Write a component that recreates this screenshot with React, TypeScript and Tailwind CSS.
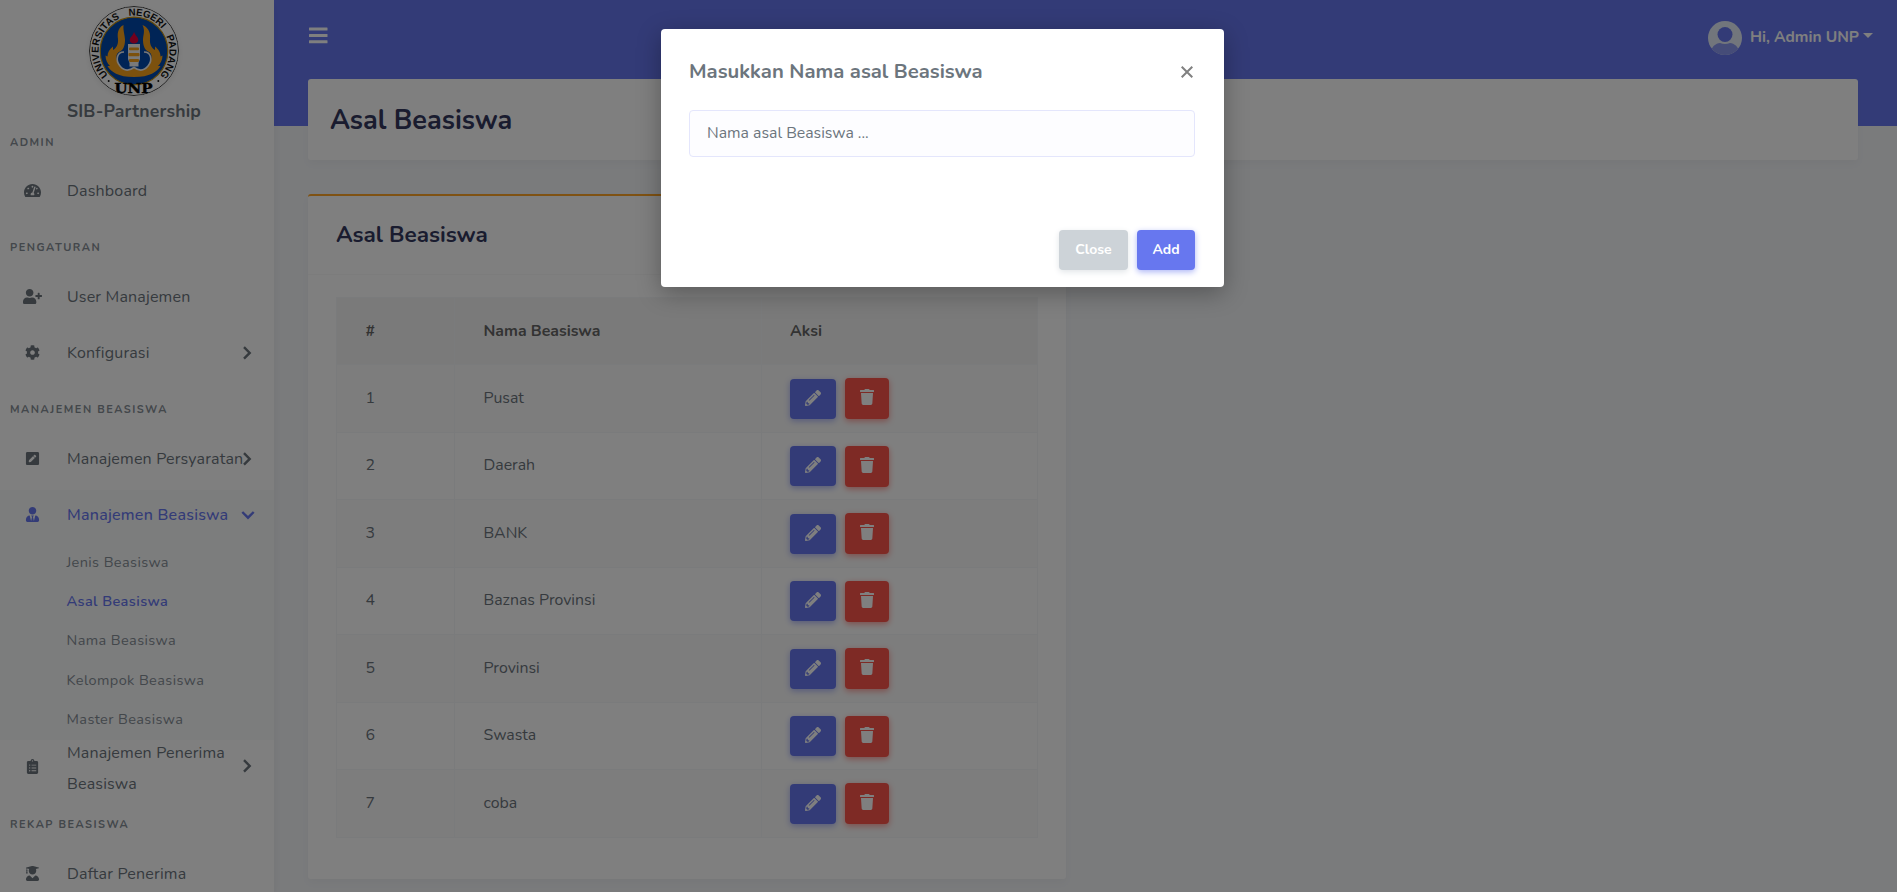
import type { ReactNode } from "react";
import {
  FaClipboardList,
  FaCog,
  FaPencilAlt,
  FaPenSquare,
  FaTachometerAlt,
  FaTrash,
  FaUserGraduate,
  FaUserPlus,
  FaUserTie,
} from "react-icons/fa";

const scholarships = ["Pusat", "Daerah", "BANK", "Baznas Provinsi", "Provinsi", "Swasta", "coba"];
const submenu = ["Jenis Beasiswa", "Asal Beasiswa", "Nama Beasiswa", "Kelompok Beasiswa", "Master Beasiswa"];

function Logo() {
  return (
    <svg viewBox="0 0 90 90" className="size-[90px] rounded-full shadow-[0_2px_6px_rgba(0,0,0,0.08)]">
      <defs>
        <path id="ring" d="M9.500 45 a35.5 35.5 0 1 1 71 0 a35.5 35.5 0 1 1 -71 0" transform="rotate(-43 45 45)" />
      </defs>
      <circle cx="45" cy="45" r="44.5" fill="#fff" stroke="#444" strokeWidth="1" />
      <circle cx="45" cy="45" r="33.8" fill="#0048ac" stroke="#c8900c" strokeWidth="1.2" />
      <g className="font-[Liberation_Sans] text-[10px] font-bold" fill="#111">
        <text>
          <textPath href="#ring" startOffset="0" textLength="68" lengthAdjust="spacing">
            UNIVERSITAS
          </textPath>
        </text>
        <text>
          <textPath href="#ring" startOffset="77" textLength="37" lengthAdjust="spacingAndGlyphs">
            NEGERI
          </textPath>
        </text>
        <text>
          <textPath href="#ring" startOffset="122.500" textLength="42.500" lengthAdjust="spacing">
            PADANG
          </textPath>
        </text>
      </g>
      <circle cx="19.700" cy="75" r="1" fill="#111" />
      <circle cx="69.300" cy="75" r="1" fill="#111" />
      <text
        x="44.500"
        y="87"
        textAnchor="middle"
        textLength="38"
        lengthAdjust="spacingAndGlyphs"
        className="font-[DejaVu_Serif] text-[12px] font-bold"
        fill="#000"
        stroke="#000"
        strokeWidth="0.400"
      >
        UNP
      </text>
      <path
        d="M34.500 19 C28 22 28.500 29 29 33 C29.500 38 27.500 42 24 44 L24 40.500 C20.500 43.500 18.500 46 18.500 50.500 L16.500 49.500 C16.500 54 18.500 57.500 21 60 L18.500 60 C22 66 29 71 45 71 C61 71 68 66 71.500 60 L69 60 C71.500 57.500 73.500 54 73.500 49.500 L71.500 50.500 C71.500 46 69.500 43.500 66 40.500 L66 44 C62.500 42 60.500 38 61 33 C61.500 29 61 22 53.500 19 C56.500 25 54 29 54 34 C54 40 56 44.500 60 46 C64 48 63 55 59 60 C55 65 50 65 45 62 C40 65 35 65 31 60 C27 55 26 48 30 46 C34 44.500 36 40 36 34 C36 29 34 25 34.500 19Z"
        fill="#f9a21a"
      />
      <path
        d="M35 46 C28 46 26 54 31 60 C35 65 40 65 45 61.500 C50 65 55 65 59 60 C64 54 62 46 55 46"
        fill="#0048ac"
        stroke="#f3f3f3"
        strokeWidth="1.600"
      />
      <path d="M39 38 H51 V53 L49.500 57 V60.500 H40.500 V57 L39 53Z" fill="#f5f5f5" />
      <rect x="40" y="41.500" width="10" height="2.800" rx="1" fill="#f9a21a" />
      <rect x="39.500" y="47" width="11" height="3.300" rx="1" fill="#f9a21a" />
      <rect x="40" y="53" width="10" height="3" rx="1" fill="#f9a21a" />
      <path d="M45 25.500 C46 29.500 49.300 31 49.300 34 C49.300 38.500 40.700 38.500 40.700 34 C40.700 31 44.500 29.500 45 25.500Z" fill="#e4003a" />
    </svg>
  );
}

function MenuHeader({ children, className = "" }: { children: ReactNode; className?: string }) {
  return (
    <div className={`flex h-4 shrink-0 items-center pl-[10px] text-[11px] font-bold leading-4 tracking-[1.5px] text-[#868e96] ${className}`}>
      {children}
    </div>
  );
}

function Chevron({ down = false }: { down?: boolean }) {
  return (
    <svg viewBox="0 0 14 14" className={down ? "size-[14px] translate-x-[1px]" : "-mt-px size-[14px]"} fill="none" stroke="currentColor" strokeWidth="2.400">
      <path d={down ? "M1.300 4 L7 9.700 L12.700 4" : "M4 1.200 L9.700 6.900 L4 12.600"} />
    </svg>
  );
}

type ItemProps = { icon: ReactNode; label: ReactNode; arrow?: "right" | "down"; active?: boolean; className?: string };

function MenuItem({ icon, label, arrow, active, className = "" }: ItemProps) {
  return (
    <div
      className={`flex h-[50px] shrink-0 items-center ${
        active ? "bg-[#f8fafb] font-medium tracking-[0.25px] text-[#6777ef]" : "tracking-[0.17px] text-[#6c757d]"
      } ${className}`}
    >
      <span className="ml-5 flex w-6 shrink-0 justify-center pb-px text-[15px]">{icon}</span>
      <span className="ml-[23px] w-[176px] shrink-0 whitespace-nowrap pt-px text-base leading-[31px]">{label}</span>
      {arrow && (
        <span className="-ml-[3px] shrink-0">
          <Chevron down={arrow === "down"} />
        </span>
      )}
    </div>
  );
}

function Sidebar() {
  return (
    <aside className="z-10 flex w-[274px] shrink-0 flex-col overflow-hidden bg-white shadow-[0_4px_8px_rgba(0,0,0,0.06)]">
      <div className="flex shrink-0 flex-col items-center pr-[6px] pt-[6px]">
        <Logo />
        <div className="mt-[3px] text-[17.6px] font-bold leading-6 tracking-[0.2px] text-[#6c757d]">SIB-Partnership</div>
      </div>
      <MenuHeader className="mt-[12px]">ADMIN</MenuHeader>
      <MenuItem className="mt-[15px]" icon={<FaTachometerAlt className="size-[17px]" />} label="Dashboard" />
      <MenuHeader className="mt-[24px]">PENGATURAN</MenuHeader>
      <MenuItem className="mt-[16px]" icon={<FaUserPlus className="size-[19px]" />} label="User Manajemen" />
      <MenuItem className="mt-[6px]" icon={<FaCog />} label="Konfigurasi" arrow="right" />
      <MenuHeader className="mt-[24px]">MANAJEMEN BEASISWA</MenuHeader>
      <MenuItem className="mt-[16px]" icon={<FaPenSquare />} label="Manajemen Persyaratan" arrow="right" />
      <MenuItem className="mt-[6px]" active icon={<FaUserTie />} label="Manajemen Beasiswa" arrow="down" />
      <ul className="flex shrink-0 flex-col bg-[#f8fafb] pb-px pt-[3px]">
        {submenu.map((name) => (
          <li
            key={name}
            className={`flex h-[39.3px] items-center pl-[66.500px] text-[14.500px] tracking-[0.4px] ${
              name === "Asal Beasiswa" ? "font-semibold text-[#6777ef]" : "text-[#868e96]"
            }`}
          >
            {name}
          </li>
        ))}
      </ul>
      <MenuItem
        className="mt-[1.500px]"
        icon={<FaClipboardList />}
        label={
          <span className="block pt-[3px]">
            Manajemen Penerima
            <br />
            Beasiswa
          </span>
        }
        arrow="right"
      />
      <MenuHeader className="mt-[25px]">REKAP BEASISWA</MenuHeader>
      <MenuItem className="mt-[16px]" icon={<FaUserGraduate />} label="Daftar Penerima" />
    </aside>
  );
}

function Navbar() {
  return (
    <header className="flex h-[79px] shrink-0 items-start justify-between pl-[35px] pr-[24px]">
      <svg viewBox="0 0 19 17" className="mt-[27px] h-[17px] w-[19px]" fill="#fff">
        <rect x="0" y="0.500" width="18.500" height="3" rx="0.500" />
        <rect x="0" y="7" width="18.500" height="3" rx="0.500" />
        <rect x="0" y="13.300" width="18.500" height="3" rx="0.500" />
      </svg>
      <div className="mt-[21px] flex items-center text-white">
        <svg viewBox="0 0 34 34" className="size-[34px] rounded-full">
          <rect width="34" height="34" fill="#e4ecf9" />
          <circle cx="17" cy="13.500" r="7.500" fill="#6777ef" />
          <path d="M2 34 C3 25 8 22.500 12 22 Q17 24 22 22 C26 22.500 31 25 32 34Z" fill="#8a98f0" />
        </svg>
        <span className="-mt-[3px] ml-[8px] text-[15.55px] font-bold leading-6">Hi, Admin UNP</span>
        <span className="-mt-[6px] ml-1 border-x-[5px] border-t-[5px] border-x-transparent border-t-white" />
      </div>
    </header>
  );
}

function ScholarshipTable() {
  const cell = "border border-[#f4f6f9] pl-[28.500px] pr-[28px] pb-0 pt-px";
  const actions = "border border-[#f4f6f9] px-[28px] pb-0 pt-px";
  return (
    <table className="w-[701px] table-fixed border-collapse text-left text-[15.85px] text-[#6c757d]">
      <colgroup>
        <col className="w-[118px]" />
        <col className="w-[307px]" />
        <col className="w-[276px]" />
      </colgroup>
      <thead>
        <tr className="h-[67px] bg-[#f5f5f5] font-bold text-[#666]">
          <th className={cell}>#</th>
          <th className={cell}>Nama Beasiswa</th>
          <th className={actions}>Aksi</th>
        </tr>
      </thead>
      <tbody>
        {scholarships.map((name, i) => (
          <tr key={name} className="h-[67.5px] odd:bg-[#fafafa]">
            <td className={cell}>{i + 1}</td>
            <td className={cell}>{name}</td>
            <td className={actions}>
              <div className="flex items-center gap-[9px] text-white">
                <button className="flex h-10 w-[46px] items-center justify-center rounded bg-[#6777ef] pb-[2px] shadow-[0_2px_6px_#acb5f6]">
                  <FaPencilAlt className="size-4" />
                </button>
                <button className="flex h-[41px] w-11 items-center justify-center rounded bg-[#fc544b] pb-[3px] shadow-[0_2px_6px_#fd9b96]">
                  <FaTrash className="h-4 w-[14px]" />
                </button>
              </div>
            </td>
          </tr>
        ))}
      </tbody>
    </table>
  );
}

function Modal() {
  return (
    <div className="absolute inset-0 z-20 flex items-start justify-center bg-black/50 pt-[29px]">
      <div className="mr-[12px] flex h-[258px] w-[563px] flex-col rounded bg-white pl-[28px] pr-[29px] text-[#6c757d] shadow-[0_6px_24px_rgba(0,0,0,0.3)]">
        <div className="mt-[29px] flex h-7 items-center justify-between">
          <h5 className="text-[20.25px] font-bold leading-7">Masukkan Nama asal Beasiswa</h5>
          <svg viewBox="0 0 12 12" className="mr-[2px] size-[12px] text-[#808080]" stroke="currentColor" strokeWidth="2">
            <path d="M0.700 0.700 L11.300 11.300 M11.300 0.700 L0.700 11.300" />
          </svg>
        </div>
        <div className="mt-[24px] flex h-[47px] shrink-0 items-center rounded border border-[#e4e6fc] bg-[#fdfdff] px-[17px] pt-px text-[15.8px]">
          Nama asal Beasiswa ...
        </div>
        <div className="mt-[73px] flex justify-end gap-[9px] text-sm font-bold text-white">
          <button className="h-10 w-[69px] rounded bg-[#cdd3d8] shadow-[0_2px_6px_#e1e5e8]">Close</button>
          <button className="h-10 w-[58px] rounded bg-[#6777ef] shadow-[0_2px_6px_#acb5f6]">Add</button>
        </div>
      </div>
    </div>
  );
}

export default function App() {
  return (
    <div className="relative flex h-[892px] w-full overflow-hidden font-['Nunito','Lato',sans-serif]">
      <Sidebar />
      <main className="flex flex-1 flex-col bg-[linear-gradient(#6777ef_126px,#f4f6f9_126px)]">
        <Navbar />
        <div className="flex flex-col items-start pl-[34px] pr-[39px]">
          <div className="flex h-[81px] w-full items-center rounded-[3px] bg-white pl-[22px] pt-px shadow-[0_4px_8px_rgba(0,0,0,0.03)]">
            <h1 className="text-[27px] font-bold leading-none text-[#34395e]">Asal Beasiswa</h1>
          </div>
          <section className="mt-[34px] flex h-[685px] w-[758px] flex-col rounded-[3px] border-t-2 border-[#ffa426] bg-white shadow-[0_4px_8px_rgba(0,0,0,0.03)]">
            <div className="flex h-[79px] items-center border-b border-[#f9f9f9] pl-[28px]">
              <h4 className="text-[22.500px] font-bold leading-none text-[#34395e]">Asal Beasiswa</h4>
            </div>
            <div className="pl-[28px] pt-[22px]">
              <ScholarshipTable />
            </div>
          </section>
        </div>
      </main>
      <Modal />
    </div>
  );
}
